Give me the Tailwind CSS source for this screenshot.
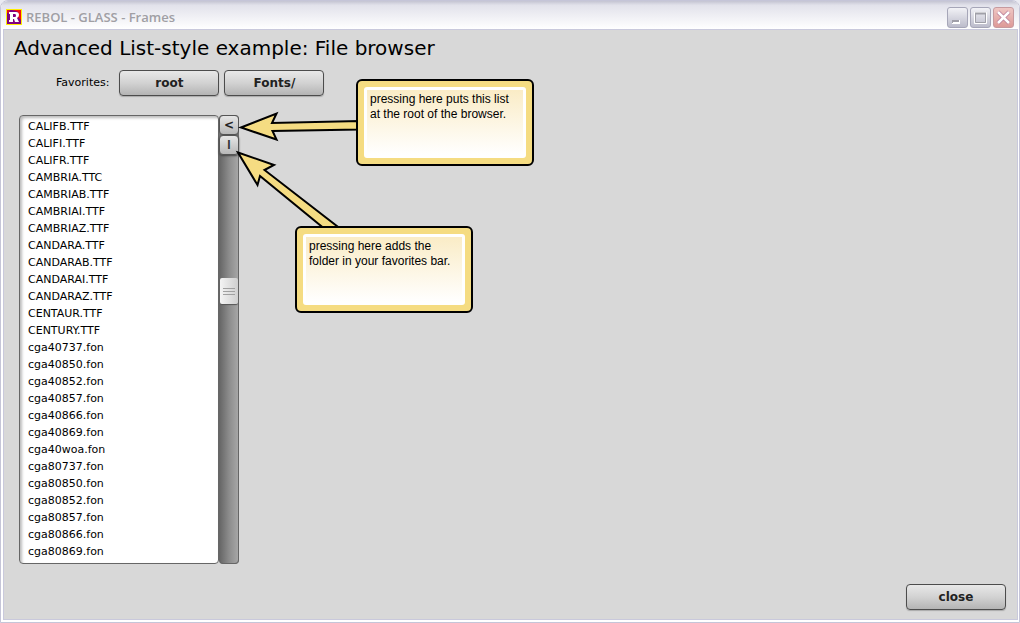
<!DOCTYPE html>
<html lang="en">
<head>
<meta charset="utf-8">
<title>REBOL - GLASS - Frames</title>
<script src="https://cdn.jsdelivr.net/npm/@tailwindcss/browser@4"></script>
</head>
<body class="bg-[#eaeaf2] font-['DejaVu_Sans',sans-serif] text-black">
<div class="relative flex min-h-screen flex-col overflow-hidden rounded-t-lg border border-[#c5c5d8] bg-white">

  <header class="flex h-7 items-center gap-1 bg-linear-to-b from-[#c4c4d2] via-[#e2e2eb] via-15% to-white pt-1 pr-[5px] pl-[5px]">
    <svg class="size-4" viewBox="0 0 16 16" aria-hidden="true">
      <rect width="16" height="16" fill="#ffee00"/>
      <rect x="1" y="1" width="14" height="14" fill="#800080"/>
      <path d="M6 1H15V11L12 8V3L10 2Z" fill="#f01010"/>
      <path d="M1 1h3l-1 3H1z" fill="#e01020"/>
      <path d="M3 3H10Q13 3 13 6Q13 8 11 9L13 13H9L8 10H7V13H3V11H4V5H3ZM7 5V8H9Q10 8 10 6.5Q10 5 9 5Z" fill="#fff" fill-rule="evenodd"/>
    </svg>
    <h1 class="flex-1 font-['Open_Sans',sans-serif] text-[13px] leading-4 font-semibold text-[#a09fa4]">REBOL - GLASS - Frames</h1>
    <div class="flex gap-[2px]">
      <button aria-label="Minimize" class="size-[21px] rounded-[3px] border border-[#a6a6b8] bg-linear-to-b from-[#f2f2f6] to-[#bcbccb]">
        <svg class="size-[19px]" viewBox="0 0 19 19"><rect x="4" y="12" width="8" height="4" fill="#fff"/><rect x="4" y="12" width="7" height="3" fill="#a09fa8"/><rect x="5" y="14" width="6" height="1" fill="#fff"/></svg>
      </button>
      <button aria-label="Maximize" class="size-[21px] rounded-[3px] border border-[#a6a6b8] bg-linear-to-b from-[#f2f2f6] to-[#bcbccb]">
        <svg class="size-[19px]" viewBox="0 0 19 19" fill="none"><path d="M3.500 4.500h12v11h-12z" stroke="#fff"/><path d="M4.500 5.500h10v9h-10z" stroke="#a0a0a8"/><path d="M4 5.500h11" stroke="#a0a0a8" stroke-width="2"/></svg>
      </button>
      <button aria-label="Close window" class="size-[21px] rounded-[3px] border border-[#c69a9f] bg-linear-to-b from-[#efc6c3] to-[#dd9a98]">
        <svg class="size-[19px]" viewBox="0 0 19 19" fill="none"><path d="M4 4L15 15M15 4L4 15" stroke="#b87c98" stroke-width="4"/><path d="M4 4L15 15M15 4L4 15" stroke="#fff" stroke-width="2.500"/></svg>
      </button>
    </div>
  </header>

  <main class="mr-px mb-[2px] ml-[2px] flex flex-1 flex-col border border-[#c9c9dc] bg-[#d8d8d8] pt-[2px] pr-[11px] pb-[9px] pl-[10px]">
    <h2 class="text-xl leading-8">Advanced List-style example: File browser</h2>

    <nav aria-label="Favorites" class="mt-[6px] flex items-center gap-[5px] pl-[42px]">
      <span class="mr-[5px] text-[11px] leading-4">Favorites:</span>
      <button class="h-[26px] w-[100px] rounded-[4px] border border-[#4c4c4c] bg-linear-to-b from-[#e8e8e8] from-0% via-[#d2d2d2] via-50% to-[#b4b4b4] text-xs font-bold text-[#222] shadow-[0_1px_1px_#aaa]">root</button>
      <button class="h-[26px] w-[100px] rounded-[4px] border border-[#4c4c4c] bg-linear-to-b from-[#e8e8e8] from-0% via-[#d2d2d2] via-50% to-[#b4b4b4] text-xs font-bold text-[#222] shadow-[0_1px_1px_#aaa]">Fonts/</button>
    </nav>

    <section aria-label="Files" class="mt-[19px] ml-[5px] flex">
      <ul id="files" class="w-[200px] rounded-[4px] border border-[#666] bg-white px-2 pt-[2px] pb-[3px] text-[11px] leading-[17px] shadow-[inset_2px_2px_3px_#bbb]">
        <li>CALIFB.TTF</li>
        <li>CALIFI.TTF</li>
        <li>CALIFR.TTF</li>
        <li>CAMBRIA.TTC</li>
        <li>CAMBRIAB.TTF</li>
        <li>CAMBRIAI.TTF</li>
        <li>CAMBRIAZ.TTF</li>
        <li>CANDARA.TTF</li>
        <li>CANDARAB.TTF</li>
        <li>CANDARAI.TTF</li>
        <li>CANDARAZ.TTF</li>
        <li>CENTAUR.TTF</li>
        <li>CENTURY.TTF</li>
        <li>cga40737.fon</li>
        <li>cga40850.fon</li>
        <li>cga40852.fon</li>
        <li>cga40857.fon</li>
        <li>cga40866.fon</li>
        <li>cga40869.fon</li>
        <li>cga40woa.fon</li>
        <li>cga80737.fon</li>
        <li>cga80850.fon</li>
        <li>cga80852.fon</li>
        <li>cga80857.fon</li>
        <li>cga80866.fon</li>
        <li>cga80869.fon</li>
      </ul>
      <div class="flex w-5 flex-col rounded-[4px] bg-[#707070]">
        <button class="z-10 h-5 rounded-[4px] border border-[#555] bg-linear-to-b from-[#e6e6e6] to-[#b8b8b8] text-xs font-bold text-[#222]">&lt;</button>
        <button class="z-10 h-5 rounded-[4px] border border-[#555] bg-linear-to-b from-[#e6e6e6] to-[#b8b8b8] font-['Liberation_Sans',sans-serif] text-xs font-bold text-[#333] shadow-[0_1px_2px_#444]">I</button>
        <div role="scrollbar" aria-label="Scroll files" aria-controls="files" aria-valuenow="32" class="-mt-1 flex flex-1 flex-col rounded-b-[4px] border border-[#666] bg-linear-to-r from-[#686868] via-[#8c8c8c] to-[#a6a6a6] pt-[126px]">
          <div class="flex h-[26px] flex-col items-center justify-center gap-[2px] rounded-[2px] bg-linear-to-r from-[#f4f4f4] to-[#cfcfcf] shadow-[0_1px_1px_#555]">
            <i class="h-px w-3 bg-[#a0a0a0]"></i><i class="h-px w-3 bg-[#a0a0a0]"></i><i class="h-px w-3 bg-[#a0a0a0]"></i>
          </div>
        </div>
      </div>
    </section>

    <footer class="mt-auto flex justify-end">
      <button class="h-[26px] w-[100px] rounded-[4px] border border-[#4c4c4c] bg-linear-to-b from-[#e8e8e8] from-0% via-[#d2d2d2] via-50% to-[#b4b4b4] text-xs font-bold text-[#222] shadow-[0_1px_1px_#aaa]">close</button>
    </footer>
  </main>

  <svg class="pointer-events-none absolute top-[99px] left-[229px] z-20 h-[140px] w-[130px]" viewBox="230 100 130 140" fill="#f5dc82" stroke="#000" stroke-width="2" aria-hidden="true">
    <path d="M241 127.500L276.500 113.500L272 123L360 121V129.500L272.500 131L276.500 139.500Z"/>
    <path d="M238 152.500L274 165L264.500 170L342 230H326L260 176L257.500 185Z"/>
  </svg>
  <aside class="absolute top-[78px] left-[355px] z-20 w-[178px] rounded-md border-2 border-black bg-[#f5dc82] p-[6px]">
    <div class="h-[71px] rounded-[3px] border-3 border-white bg-linear-to-b from-[#faecc6] to-white px-[3px] py-[2px] font-['Liberation_Sans',Arial,sans-serif] text-xs leading-[15px]">pressing here puts this list<br>at the root of the browser.</div>
  </aside>
  <aside class="absolute top-[225px] left-[294px] z-20 w-[178px] rounded-md border-2 border-black bg-[#f5dc82] p-[6px]">
    <div class="h-[71px] rounded-[3px] border-3 border-white bg-linear-to-b from-[#faecc6] to-white px-[3px] py-[2px] font-['Liberation_Sans',Arial,sans-serif] text-xs leading-[15px]">pressing here adds the<br>folder in your favorites bar.</div>
  </aside>
</div>
</body>
</html>
